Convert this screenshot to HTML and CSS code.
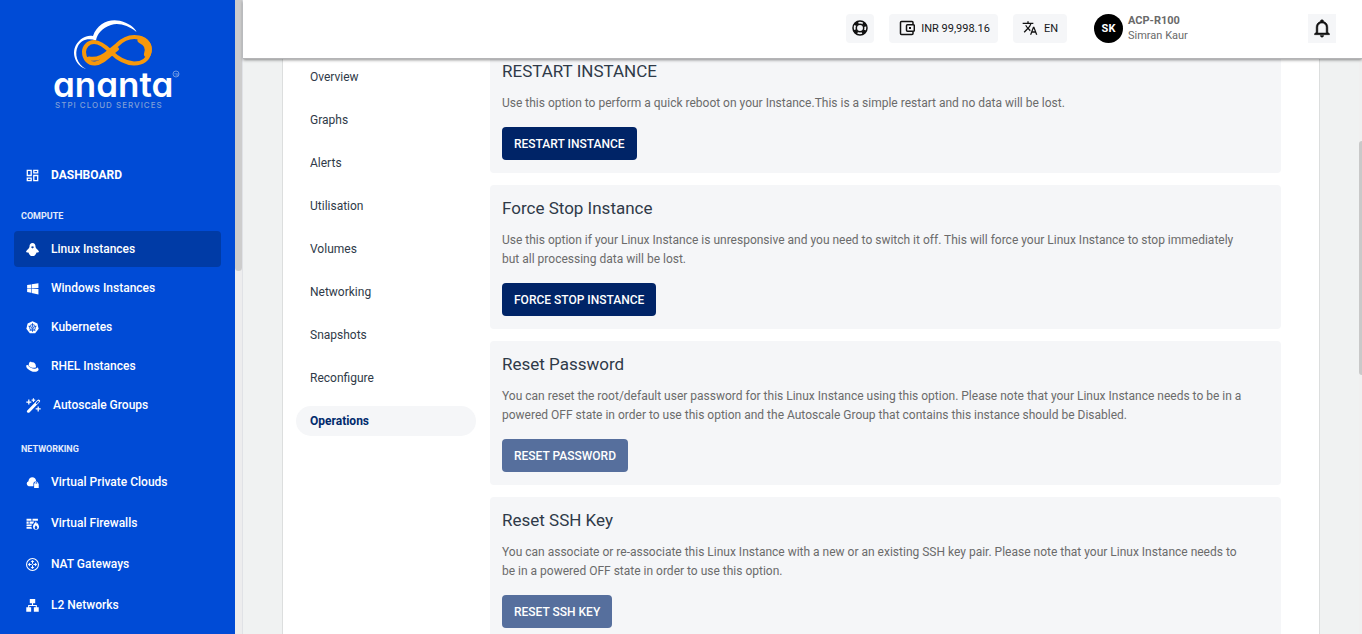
FILE: index.html
```html
<!DOCTYPE html>
<html lang="en">
<head>
<meta charset="utf-8">
<meta name="viewport" content="width=device-width, initial-scale=1">
<title>Linux Instance - Operations</title>
<link rel="stylesheet" href="styles.css">
</head>
<body>
<div class="app">
  <aside class="sidebar">
    <div class="sidebar-body">
      <a class="logo" href="#" aria-label="ananta STPI Cloud Services">
        <svg width="130" height="96" viewBox="0 0 130 96">
          <path fill="#fff" d="M35 51C25 48 20 36 25 27C29 20 36 16.500 42 18C47 4 61-1 74 4.500C80 7 84 10 85.500 14C77 7.500 68 4.500 60 7C51 10 46 16 45 22.500C37 19.500 30 22 27 28C23 36 26 46 35 51Z"/>
          <path fill="none" stroke="#f7980a" stroke-width="4" stroke-linecap="round" d="M38 40.500C46 42 52 39 58 33.500L66 27C73 20 81 18 88 19.500C96 21.500 99.500 27 98.500 34C97 42 91 45.500 83 45.500C74 45 67 41 60 34C53 27 48 24 43 24C37 24 33 29 33 34C33 41 38 46 44 45.500C52 45 58 37 66 31"/>
          <path fill="none" stroke="#f7980a" stroke-width="7" stroke-linecap="round" d="M90 22C97 25 98.500 30 96.500 36"/>
          <text class="logo-name" x="2" y="79">ananta</text>
          <circle cx="125" cy="56" r="3" fill="none" stroke="#6f98e4"/>
          <text class="logo-mark" x="123" y="58">TM</text>
          <text class="logo-tag" x="4" y="90">STPI CLOUD SERVICES</text>
        </svg>
      </a>
      <nav aria-label="Main">
        <a class="nav-link nav-home" href="#">
          <svg class="icon" viewBox="2 2 20 20"><path d="M19 5v2h-4V5h4M9 5v6H5V5h4m10 8v6h-4v-6h4M9 17v2H5v-2h4M21 3h-8v6h8V3zM11 3H3v10h8V3zm10 8h-8v10h8V11zm-10 4H3v6h8v-6z"/></svg>
          DASHBOARD</a>
        <h2 class="nav-title">COMPUTE</h2>
        <ul class="nav-list">
          <li><a class="nav-link is-active" href="#">
            <svg class="icon" viewBox="0 0 24 24"><path fill-rule="evenodd" d="M12 0C8.500 0 6.500 2.500 6.500 6c0 2-.5 3-2.500 5-1.500 1.500-2.500 2.500-4 4.500C1 17.500 3 18 4.500 17.500c1 3 2.500 5 4.500 6.500h6c2-1.500 3.500-3.500 4.500-6.500 1.500.5 3.500 0 4.500-2C22.500 13.500 21.500 12.500 20 11c-2-2-2.500-3-2.500-5 0-3.500-2-6-5.500-6ZM9 7.500 12 6l3 1.500L12 10Z"/></svg>
            Linux Instances</a></li>
          <li><a class="nav-link" href="#">
            <svg class="icon" viewBox="0 1 23 23"><path d="M2 12V6.500L9 5.300V11.900L2 12M22 3V11.750L10 11.900V5.200L22 3M2 13L9 13.100V20L2 18.750V13M22 13.250V23L10 20.600V13.100L22 13.250Z"/></svg>
            Windows Instances</a></li>
          <li><a class="nav-link" href="#">
            <svg class="icon" viewBox="0 0 24 24"><path d="M12 .5 21 4.700 23.300 14.500 17 22.800H7L.7 14.500 3 4.700Z"/><g fill="none" stroke="#004bd6" stroke-width="1.500"><circle cx="12" cy="12" r="5.500"/><circle cx="12" cy="12" r="1.500"/><path d="M12 4v6M12 14v6M4.500 9.500l6 2M19.500 9.500l-6 2M7 18.500l4-5M17 18.500l-4-5"/></g></svg>
            Kubernetes</a></li>
          <li><a class="nav-link" href="#">
            <svg class="icon" viewBox="0 0 24 24"><path d="M5.500 6.500c1-3.500 3-3.500 5-2.500 4 0 6 1 7 4l1.200 5.500c-5 2.500-11 0-14-3ZM3.500 9.500C-1 9 0 13 3 16c5 5 12 7 17 5 4.500-1.500 4-5 .5-7.500-.5 2-1.500 2.500-4 2.500C11 16 6 13.500 3.500 9.500Z"/></svg>
            RHEL Instances</a></li>
          <li><a class="nav-link" href="#">
            <svg class="icon icon-wide" viewBox="0 0 24 24"><path fill-rule="evenodd" d="M2 20 18.500 3q1.500-1.500 3.300 0t0 3.300L5.500 23q-1.500 1-3.300 0t-.2-3ZM15.500 8.500l1.500 1.500 3.500-3.500q.5-1-.2-1.700t-1.600 0Z"/><path d="M3.500 2.500H5.500V5.500H8.500v2h-3v3H3.500v-3H.5V5.500h3ZM11 .5h1.700v2h2v1.700h-2v2H11v-2H9V2.500h2ZM18.500 13.500h2v3h3v2h-3v3h-2v-3h-3v-2h3Z"/></svg>
            Autoscale Groups</a></li>
        </ul>
        <h2 class="nav-title">NETWORKING</h2>
        <ul class="nav-list nav-list-loose">
          <li><a class="nav-link" href="#">
            <svg class="icon" viewBox="0 0 24 24"><path fill-rule="evenodd" d="M5 19a5 5 0 0 1-.5-9.500C5 5 8 2.500 11.500 2.500c4 0 7 3 7.200 7-3 .5-5 2-5 4.500v5ZM15 14h1v-1a3 3 0 0 1 6 0v1h1.500v8H15Zm2.500 0h3v-1a1.500 1.500 0 0 0-3 0Z"/></svg>
            Virtual Private Clouds</a></li>
          <li><a class="nav-link" href="#">
            <svg class="icon" viewBox="0 0 24 24"><path d="M1 3h9v4H1ZM12 3h10v4H12ZM1 8.500h4v4H1ZM6.500 8.500H15L13 12.500H6.500ZM1 14h10l-1 3H1ZM1 18.500h9l1 3H1Z"/><path fill-rule="evenodd" d="M18 8c0 3-5 5-5 10a5.500 5.500 0 0 0 11 0c0-3-2-4-2-7l-2 2c0-2-1-4-2-5ZM18 15c2 2 3 3 3 5a2.500 2.500 0 0 1-5 0c0-2 1.500-3 2-5Z"/></svg>
            Virtual Firewalls</a></li>
          <li><a class="nav-link" href="#">
            <svg class="icon" viewBox="0 0 24 24"><circle cx="12" cy="12" r="11" fill="none" stroke="currentColor" stroke-width="2"/><path d="m12 3.500 3.500 4h-2.500v3h-2v-3H8.500ZM12 20.500l-3.500-4h2.500v-3h2v3h2.500ZM3.500 12l4-3.500v2.500h3v2h-3v2.500ZM20.500 12l-4 3.500v-2.500h-3v-2h3v-2.500Z"/></svg>
            NAT Gateways</a></li>
          <li><a class="nav-link" href="#">
            <svg class="icon" viewBox="0 0 24 24"><path d="M7 0h10v8h-4v3h7v4h3.500v8.500h-9V15H18v-2H6v2h3.500v8.500h-9V15H4v-4h7V8H7Z"/></svg>
            L2 Networks</a></li>
        </ul>
      </nav>
    </div>
    <div class="sidebar-track" aria-hidden="true"><div class="sidebar-thumb"></div></div>
  </aside>

  <div class="main">
    <header class="topbar">
      <button class="chip chip-icon" type="button" aria-label="Support">
        <svg width="16" height="16" viewBox="0 0 16 16" fill="none" stroke="#111"><circle cx="8" cy="8" r="7" stroke-width="1.500"/><circle cx="8" cy="8" r="3.700" stroke-width="1.500"/><circle cx="8" cy="8" r="5.500" stroke-width="3" stroke-dasharray="4 4.640" stroke-dashoffset="-2.320"/></svg>
      </button>
      <button class="chip" type="button">
        <svg width="16" height="16" viewBox="0 0 16 16" fill="none" stroke="#111" stroke-width="1.500"><path d="M14 4V2.500q0-1-1-1H2.500q-1 0-1 1v11q0 1 1 1H13q1 0 1-1V12"/><rect x="7.500" y="4.700" width="7.800" height="6.600" rx="1"/><path d="M10 8h2" stroke-width="2"/></svg>
        INR 99,998.16</button>
      <button class="chip chip-lang" type="button">
        <svg width="16" height="16" viewBox="0 0 24 24" fill="#111"><path d="M12.870 15.070 10.330 12.560l.03-.03C12.100 10.590 13.340 8.360 14.070 6H17V4H10V2H8V4H1V6H12.170C11.500 7.920 10.440 9.750 9 11.350 8.070 10.320 7.300 9.190 6.690 8H4.690C5.420 9.630 6.420 11.170 7.670 12.560L2.580 17.580 4 19l5-5 3.110 3.110.76-2.040M18.500 10h-2L12 22h2l1.120-3h4.750L21 22h2L18.500 10M15.880 17l1.620-4.330L19.120 17H15.880Z"/></svg>
        EN</button>
      <a class="account" href="#">
        <span class="avatar">SK</span>
        <span class="account-text"><strong>ACP-R100</strong><span>Simran Kaur</span></span>
      </a>
      <button class="chip chip-icon chip-bell" type="button" aria-label="Notifications">
        <svg width="20" height="20" viewBox="0 0 24 24" fill="#111" stroke="#111" stroke-width=".6"><path d="M10 21H14C14 22.100 13.100 23 12 23S10 22.100 10 21M21 19V20H3V19L5 17V11C5 7.900 7 5.200 10 4.300V4C10 2.900 10.900 2 12 2S14 2.900 14 4V4.300C17 5.200 19 7.900 19 11V17L21 19M17 11C17 8.200 14.800 6 12 6S7 8.200 7 11V18H17V11Z"/></svg>
      </button>
    </header>

    <div class="scroll">
      <main class="panel">
        <nav class="tabs" aria-label="Instance">
          <a class="tab" href="#">Overview</a>
          <a class="tab" href="#">Graphs</a>
          <a class="tab" href="#">Alerts</a>
          <a class="tab" href="#">Utilisation</a>
          <a class="tab" href="#">Volumes</a>
          <a class="tab" href="#">Networking</a>
          <a class="tab" href="#">Snapshots</a>
          <a class="tab" href="#">Reconfigure</a>
          <a class="tab is-current" href="#" aria-current="page">Operations</a>
        </nav>
        <div class="cards">
          <section class="card">
            <h3>RESTART INSTANCE</h3>
            <p>Use this option to perform a quick reboot on your Instance.This is a simple restart and no data will be lost.</p>
            <button class="action" type="button">RESTART INSTANCE</button>
          </section>
          <section class="card">
            <h3>Force Stop Instance</h3>
            <p>Use this option if your Linux Instance is unresponsive and you need to switch it off. This will force your Linux Instance to stop immediately but all processing data will be lost.</p>
            <button class="action" type="button">FORCE STOP INSTANCE</button>
          </section>
          <section class="card">
            <h3>Reset Password</h3>
            <p>You can reset the root/default user password for this Linux Instance using this option. Please note that your Linux Instance needs to be in a powered OFF state in order to use this option and the Autoscale Group that contains this instance should be Disabled.</p>
            <button class="action" type="button" disabled>RESET PASSWORD</button>
          </section>
          <section class="card">
            <h3>Reset SSH Key</h3>
            <p>You can associate or re-associate this Linux Instance with a new or an existing SSH key pair. Please note that your Linux Instance needs to be in a powered OFF state in order to use this option.</p>
            <button class="action" type="button" disabled>RESET SSH KEY</button>
          </section>
        </div>
      </main>
      <div class="page-track" aria-hidden="true"><div class="page-thumb"></div></div>
    </div>
  </div>
</div>
</body>
</html>
```
FILE: styles.css
```css
* { box-sizing: border-box; }
body {
  margin: 0;
  font-family: Roboto, "Liberation Sans", sans-serif;
  font-size: 12px;
  color: #2f3a48;
}
a { color: inherit; text-decoration: none; }
button { font: inherit; border: 0; cursor: pointer; }
h2, h3, p, ul { margin: 0; padding: 0; }
ul { list-style: none; }

.app { display: flex; height: 100vh; overflow: hidden; }

.sidebar { display: flex; flex: none; width: 243px; background: #ededee; }
.sidebar-body { flex: 1; padding: 18px 14px 0; background: #004bd6; color: #fff; overflow: hidden; }
.sidebar-track { width: 8px; border-right: 1px solid #e0e2e6; }
.sidebar-thumb { height: 271px; border-radius: 0 0 4px 4px; background: #cdcdcd; }

.logo { display: block; height: 139px; padding-left: 37px; }
.logo svg { display: block; overflow: visible; }
.logo-name { font-family: Inter, sans-serif; font-size: 35px; font-weight: 600; fill: #fff; font-feature-settings: "cv11"; }
.logo-mark { font-size: 3px; fill: #8fb0ec; }
.logo-tag { font-family: Inter, sans-serif; font-size: 8px; font-weight: 500; letter-spacing: 1px; fill: #7f9fd6; }

.nav-link {
  display: flex;
  align-items: center;
  gap: 12px;
  height: 36px;
  padding: 0 12px;
  border-radius: 4px;
  font-weight: 500;
}
.nav-link.is-active { background: #003ba6; }
.nav-home { font-weight: 700; }
.icon { width: 13px; height: 13px; fill: currentColor; flex: none; }
.icon-wide { width: 15px; height: 15px; }
.nav-title { padding: 15px 7px 7px; font-size: 9px; line-height: 16px; font-weight: 700; color: #e4ecfb; }
.nav-list { display: flex; flex-direction: column; gap: 3px; }
.nav-list-loose { gap: 5px; }
.nav-list + .nav-title { padding-top: 18px; }

.main { position: relative; flex: 1; min-width: 0; background: #f0f2f2; }
.topbar {
  position: absolute;
  inset: 0 0 auto;
  z-index: 2;
  display: flex;
  align-items: center;
  justify-content: flex-end;
  height: 59px;
  padding: 0 26px 2px 0;
  background: #fff;
  border-bottom: 1px solid #b4b4b6;
  box-shadow: 0 1px 3px rgba(0, 0, 0, .45);
}
.chip {
  display: flex;
  align-items: center;
  gap: 6px;
  height: 29px;
  margin-right: 15px;
  padding: 0 8px 0 10px;
  border-radius: 4px;
  background: #f5f6f8;
  color: #16181b;
  font-size: 11px;
}
.chip-icon { justify-content: center; width: 28px; padding: 0; }
.chip-lang { margin-right: 27px; padding: 0 9px; }
.chip-bell { margin-right: 0; border-radius: 0; }
.account { display: flex; align-items: center; gap: 5px; width: 214px; }
.avatar {
  display: grid;
  place-items: center;
  width: 29px;
  height: 29px;
  border-radius: 50%;
  background: #000;
  color: #fff;
  font-size: 11px;
  font-weight: 700;
}
.account-text { display: grid; font-size: 11px; line-height: 15px; color: #6a6a6a; }

.scroll { display: flex; height: 100%; padding-left: 39px; }
.panel {
  display: flex;
  flex: 1;
  gap: 14px;
  min-width: 0;
  padding: 48px 38px 0 13px;
  background: #fff;
  border: solid #dcdede;
  border-width: 0 1px;
  overflow: hidden;
}
.page-track { width: 3px; margin-left: 39px; padding-top: 141px; background: #f0f0f0; }
.page-thumb { height: 234px; border-radius: 3px 0 0 3px; background: #c9c9c9; }

.tabs { display: flex; flex: none; flex-direction: column; gap: 13px; width: 180px; padding-top: 14px; }
.tab { padding: 0 14px; border-radius: 15px; line-height: 30px; }
.tab.is-current { background: #f5f6f8; color: #002a6c; font-weight: 700; }

.cards { display: flex; flex: 1; flex-direction: column; gap: 12px; min-width: 0; }
.card { flex: none; padding: 12px 12px 13px; border-radius: 4px; background: #f5f6f8; }
.card h3 { margin-bottom: 12px; font-size: 17px; line-height: 22px; font-weight: 400; }
.card p { margin-bottom: 14px; padding-right: 20px; line-height: 19px; color: #6b6b6b; }
.action {
  display: block;
  height: 33px;
  padding: 0 12px;
  border-radius: 4px;
  background: #002467;
  color: #fff;
  font-weight: 500;
}
.action:disabled { background: #566f9d; cursor: default; }
```
